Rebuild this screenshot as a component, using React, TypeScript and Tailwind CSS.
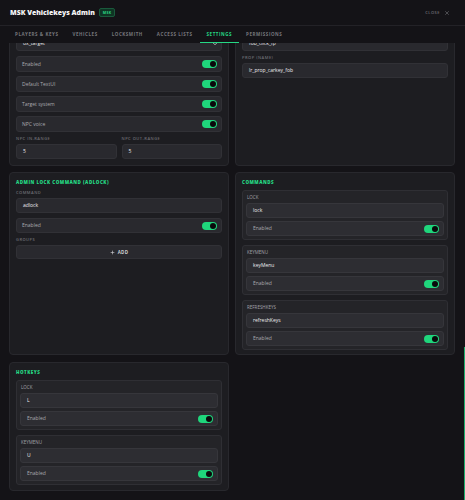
import { X, ChevronDown, Plus } from "lucide-react"

const tabs = ["Players & Keys", "Vehicles", "Locksmith", "Access Lists", "Settings", "Permissions"]

function Toggle() {
  return (
    <div className="flex h-[8px] w-[15px] items-center justify-end rounded-full bg-[#1fd67c] px-[1px]">
      <div className="h-[6px] w-[6px] rounded-full bg-[#0a0a0c]" />
    </div>
  )
}

function ToggleRow({ label, tall }: { label: string; tall?: boolean }) {
  return (
    <div
      className={`flex items-center justify-between rounded-[3px] border border-[#313136] bg-[#29292e] pl-[5px] pr-[4px] ${
        tall ? "h-[16px]" : "h-[15px]"
      }`}
    >
      <span className="text-[5px] leading-none text-[#a9a9ae]">{label}</span>
      <Toggle />
    </div>
  )
}

function Input({ value, select }: { value: string; select?: boolean }) {
  return (
    <div className="flex h-[15px] items-center justify-between rounded-[3px] border border-[#313136] bg-[#29292e] pl-[6px] pr-[3px]">
      <span className="text-[5px] leading-none font-medium text-[#ececee]">{value}</span>
      {select && <ChevronDown size={6} strokeWidth={3} className="text-[#d8d8da]" />}
    </div>
  )
}

function Label({ text }: { text: string }) {
  return (
    <div className="mb-[1px] h-[8px] text-[4px] leading-[8px] font-semibold tracking-[0.5px] text-[#6f6f75]">
      {text}
    </div>
  )
}

function Field({ label, value, select }: { label: string; value: string; select?: boolean }) {
  return (
    <div className="mt-[3px]">
      <Label text={label} />
      <Input value={value} select={select} />
    </div>
  )
}

function Card({ title, children }: { title?: string; children: React.ReactNode }) {
  return (
    <div className="flex flex-col rounded-[4px] border border-[#28282d] bg-[#1d1d21] px-[6px] pt-[6px]">
      {title && (
        <div className="mb-[4px] h-[6px] text-[4.5px] leading-[6px] font-extrabold tracking-[0.5px] text-[#25d884]">
          {title}
        </div>
      )}
      {children}
    </div>
  )
}

function SubCard({ label, value }: { label: string; value: string }) {
  return (
    <div className="rounded-[3px] border border-[#2f2f34] bg-[#242428] px-[3px] pt-[2px] pb-[3px]">
      <div className="mb-[2px] h-[8px] pl-[1px] text-[4.5px] leading-[8px] text-[#a2a2a8]">{label}</div>
      <div className="flex flex-col gap-[3px]">
        <div className="flex h-[15px] items-center rounded-[3px] border border-[#36363b] bg-[#2d2d32] pl-[6px]">
          <span className="text-[5px] leading-none font-medium text-[#ececee]">{value}</span>
        </div>
        <div className="flex h-[15px] items-center justify-between rounded-[3px] border border-[#36363b] bg-[#2d2d32] pl-[6px] pr-[4px]">
          <span className="text-[5px] leading-none text-[#a9a9ae]">Enabled</span>
          <Toggle />
        </div>
      </div>
    </div>
  )
}

export default function App() {
  return (
    <div className="relative flex h-[500px] w-[465px] flex-col overflow-hidden bg-[#141317] font-['Open_Sans',sans-serif]">
      {/* Header */}
      <div className="flex h-[26px] shrink-0 items-center justify-between border-b border-[#232227] pr-[15px] pl-[10px]">
        <div className="flex items-center gap-[4px]">
          <span className="text-[6.9px] leading-[10px] font-extrabold text-[#f4f4f5]">MSK Vehiclekeys Admin</span>
          <span className="rounded-[2px] border border-[#1a5a3c] bg-[#0f3424] px-[3px] py-[1.5px] text-[3.5px] leading-none font-bold tracking-[0.3px] text-[#2bd884]">
            MSK
          </span>
        </div>
        <div className="flex items-center gap-[4px] text-[#6e6e74]">
          <span className="text-[4px] leading-none font-semibold tracking-[0.5px]">CLOSE</span>
          <X size={6} strokeWidth={2.5} />
        </div>
      </div>

      {/* Tabs */}
      <div className="flex h-[17px] shrink-0 pl-[8px]">
        {tabs.map((tab) => (
          <div
            key={tab}
            className={`flex items-center px-[7px] text-[4.5px] leading-none font-bold tracking-[0.55px] uppercase ${
              tab === "Settings"
                ? "border-b border-[#25d884] text-[#25d884]"
                : "border-b border-transparent text-[#77777d]"
            }`}
          >
            {tab}
          </div>
        ))}
      </div>

      {/* Content, scrolled to the end */}
      <div className="flex min-h-0 flex-1 flex-col justify-end overflow-hidden pr-[10px] pb-[9px] pl-[9px]">
        <div className="grid grid-cols-2 gap-[6px]">
          <Card>
            <Input value="ox_target" select />
            <div className="mt-[5px] flex flex-col gap-[4px]">
              <ToggleRow label="Enabled" tall />
              <ToggleRow label="Default TextUI" tall />
              <ToggleRow label="Target system" tall />
              <ToggleRow label="NPC voice" tall />
            </div>
            <div className="grid grid-cols-2 gap-[5px] pb-[6px]">
              <Field label="NPC IN-RANGE" value="5" />
              <Field label="NPC OUT-RANGE" value="5" />
            </div>
          </Card>
          <Card>
            <Input value="fob_click_fp" />
            <Field label="PROP (NAME)" value="lr_prop_carkey_fob" />
          </Card>
        </div>

        <div className="mt-[6px] grid grid-cols-2 gap-[6px]">
          <Card title="ADMIN LOCK COMMAND (ADLOCK)">
            <Label text="COMMAND" />
            <Input value="adlock" />
            <div className="mt-[5px]">
              <ToggleRow label="Enabled" />
            </div>
            <div className="mt-[3px]">
              <Label text="GROUPS" />
            </div>
            <div className="flex h-[14px] items-center justify-center gap-[3px] rounded-[3px] border border-[#313136] bg-[#29292e] text-[#cfcfd2]">
              <Plus size={5} strokeWidth={3} />
              <span className="text-[4.5px] leading-none font-bold tracking-[0.3px]">ADD</span>
            </div>
          </Card>
          <Card title="COMMANDS">
            <div className="flex flex-col gap-[5px] pt-[1px] pb-[4px]">
              <SubCard label="LOCK" value="lock" />
              <SubCard label="KEYMENU" value="keyMenu" />
              <SubCard label="REFRESHKEYS" value="refreshKeys" />
            </div>
          </Card>
        </div>

        <div className="mt-[7px] grid grid-cols-2 gap-[6px]">
          <Card title="HOTKEYS">
            <div className="flex flex-col gap-[5px] pt-[1px] pb-[5px]">
              <SubCard label="LOCK" value="L" />
              <SubCard label="KEYMENU" value="U" />
            </div>
          </Card>
        </div>
      </div>

      {/* Scrollbar thumb */}
      <div className="absolute top-[347px] right-0 bottom-0 w-[1px] bg-[#1fae6e]" />
    </div>
  )
}
